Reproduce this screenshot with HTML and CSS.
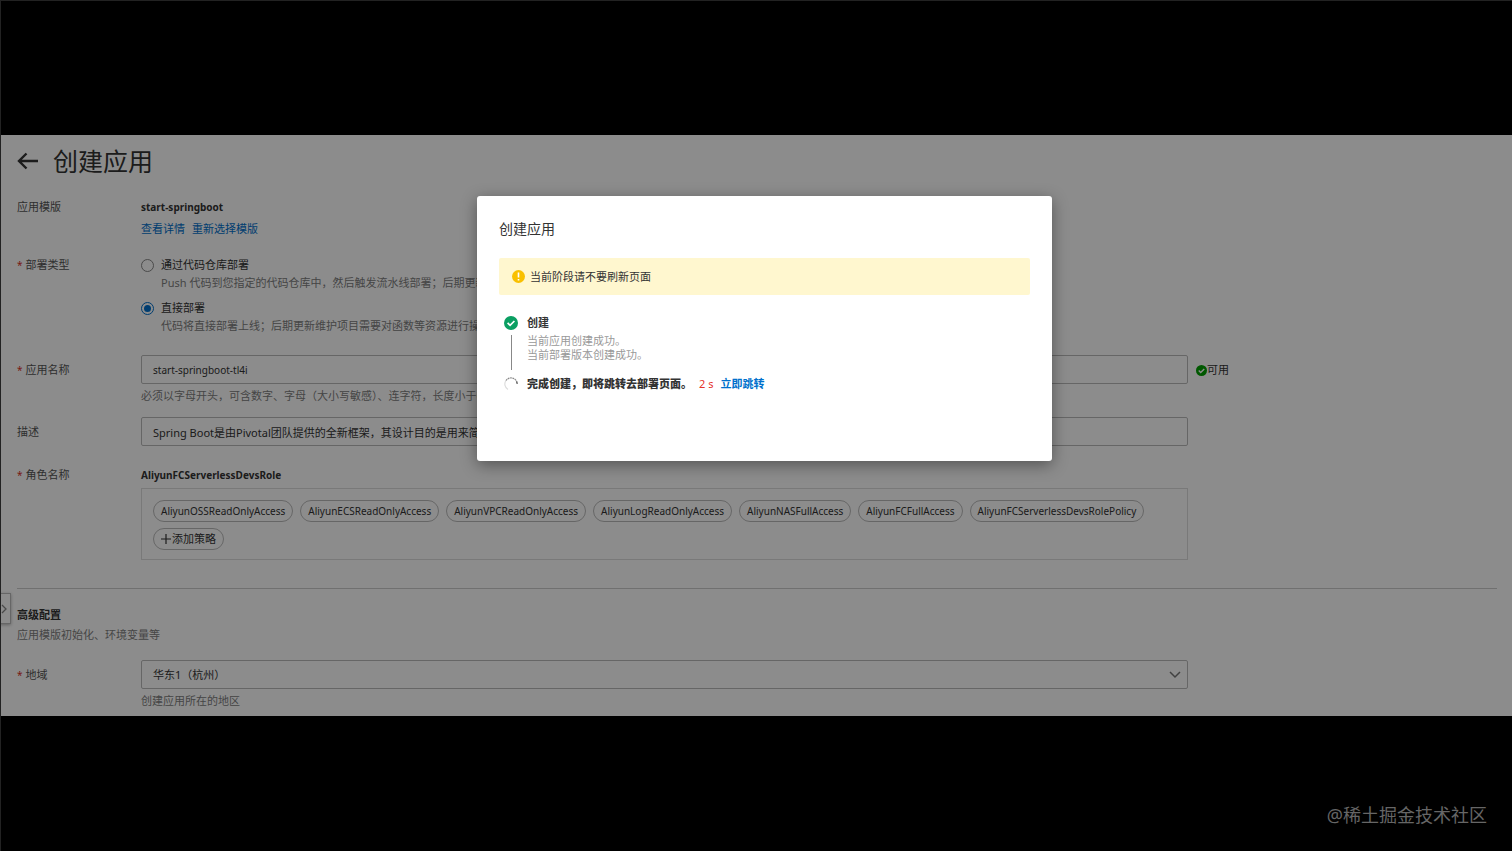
FILE: index.html
```html
<!DOCTYPE html>
<html lang="zh-CN">
<head>
<meta charset="UTF-8">
<meta name="viewport" content="width=device-width, initial-scale=1.0">
<title>创建应用</title>
<link rel="stylesheet" href="styles.css">
</head>
<body>
    <main class="stage">
        <header class="page-header">
            <a href="#" class="back" aria-label="返回">
                <svg width="22" height="18" viewBox="0 0 22 18" fill="none" stroke="currentColor" stroke-width="2.4"><path d="M21 9H2M9.500 1.500L2 9l7.500 7.500"/></svg>
            </a>
            <h1>创建应用</h1>
        </header>

        <form class="app-form">
            <div class="row row-template">
                <span class="label">应用模版</span>
                <div>
                    <strong class="latin">start-springboot</strong>
                    <div class="links"><a href="#">查看详情</a><a href="#">重新选择模版</a></div>
                </div>
            </div>

            <div class="row row-deploy">
                <span class="label required">部署类型</span>
                <div class="options">
                    <div class="option">
                        <input type="radio" id="repo" name="deploy">
                        <label for="repo">通过代码仓库部署</label>
                        <p class="help">Push 代码到您指定的代码仓库中，然后触发流水线部署；后期更新项目</p>
                    </div>
                    <div class="option">
                        <input type="radio" id="direct" name="deploy" checked>
                        <label for="direct">直接部署</label>
                        <p class="help">代码将直接部署上线；后期更新维护项目需要对函数等资源进行操作</p>
                    </div>
                </div>
            </div>

            <div class="row row-name">
                <label class="label required" for="name">应用名称</label>
                <div>
                    <input type="text" class="field latin" id="name" value="start-springboot-tl4i">
                    <p class="help">必须以字母开头，可含数字、字母（大小写敏感）、连字符，长度小于64</p>
                </div>
                <span class="available">
                    <svg width="11" height="11" viewBox="0 0 14 14"><circle cx="7" cy="7" r="7" fill="#00a000"/><path d="M3.500 7l2.500 2.500 4.500-4.500" fill="none" stroke="#fff" stroke-width="1.800"/></svg>可用
                </span>
            </div>

            <div class="row row-desc">
                <label class="label" for="desc">描述</label>
                <input type="text" class="field" id="desc" value="Spring Boot是由Pivotal团队提供的全新框架，其设计目的是用来简化新Spring应用">
            </div>

            <div class="row row-role">
                <span class="label required">角色名称</span>
                <div>
                    <strong class="latin">AliyunFCServerlessDevsRole</strong>
                    <div class="policies">
                        <span class="chip latin">AliyunOSSReadOnlyAccess</span>
                        <span class="chip latin">AliyunECSReadOnlyAccess</span>
                        <span class="chip latin">AliyunVPCReadOnlyAccess</span>
                        <span class="chip latin">AliyunLogReadOnlyAccess</span>
                        <span class="chip latin">AliyunNASFullAccess</span>
                        <span class="chip latin">AliyunFCFullAccess</span>
                        <span class="chip latin">AliyunFCServerlessDevsRolePolicy</span>
                        <button type="button" class="chip add">
                            <svg width="10" height="10" viewBox="0 0 10 10" stroke="currentColor" stroke-width="1.200"><path d="M5 0v10M0 5h10"/></svg>添加策略
                        </button>
                    </div>
                </div>
            </div>

            <section class="advanced">
                <h2>高级配置</h2>
                <p class="help">应用模版初始化、环境变量等</p>
            </section>

            <div class="row row-region">
                <label class="label required" for="region">地域</label>
                <div>
                    <div class="select">
                        <select class="field" id="region"><option>华东1（杭州）</option></select>
                        <svg width="12" height="8" viewBox="0 0 12 8" fill="none" stroke="#777" stroke-width="1.500"><path d="M1 1l5 5 5-5"/></svg>
                    </div>
                    <p class="help">创建应用所在的地区</p>
                </div>
            </div>
        </form>

        <button type="button" class="drawer" aria-label="展开">
            <svg width="6" height="10" viewBox="0 0 6 10" fill="none" stroke="currentColor" stroke-width="1.300"><path d="M1 1l4 4-4 4"/></svg>
        </button>

        <div class="overlay">
            <div class="dialog" role="dialog" aria-labelledby="dialog-title">
                <h2 id="dialog-title">创建应用</h2>
                <div class="alert">
                    <svg width="13" height="13" viewBox="0 0 13 13"><circle cx="6.500" cy="6.500" r="6.500" fill="#f9c000"/><path d="M6.500 2.500v5M6.500 9v1.600" stroke="#fff" stroke-width="1.600"/></svg>
                    当前阶段请不要刷新页面
                </div>
                <ol class="steps">
                    <li>
                        <div class="marker">
                            <svg width="14" height="14" viewBox="0 0 14 14"><circle cx="7" cy="7" r="7" fill="#0a9f62"/><path d="M3.600 6.800l2.500 2.500 4.300-4.300" fill="none" stroke="#fff" stroke-width="1.700"/></svg>
                            <span class="line"></span>
                        </div>
                        <div>
                            <strong>创建</strong>
                            <p>当前应用创建成功。</p>
                            <p>当前部署版本创建成功。</p>
                        </div>
                    </li>
                    <li>
                        <div class="marker">
                            <svg width="14" height="14" viewBox="0 0 14 14" fill="none" stroke-width="1.200"><path d="M4 12.500A6.200 6.200 0 0 1 2 3.500" stroke="#ddd"/><path d="M2 3.500A6.200 6.200 0 0 1 13 5.500" stroke="#888" stroke-dasharray="1.800 .6"/><path d="M12.800 4.800L13.200 7" stroke="#555"/></svg>
                        </div>
                        <div class="finish">
                            <strong>完成创建，即将跳转去部署页面。</strong>
                            <span class="count">2 s</span>
                            <a href="#">立即跳转</a>
                        </div>
                    </li>
                </ol>
            </div>
        </div>
    </main>
    <footer class="watermark">@稀土掘金技术社区</footer>
</body>
</html>
```

FILE: styles.css
```css
* {
    box-sizing: border-box;
}

body {
    margin: 0;
    min-height: 100vh;
    padding-top: 134px;
    background-color: #000;
    border-top: 1px solid #222;
    border-left: 1px solid #222;
    font-family: "Noto Sans", "Noto Sans CJK SC", sans-serif;
    font-size: 11px;
    line-height: 18px;
    color: #333;
}

h1, h2, p, ol {
    margin: 0;
    padding: 0;
    font-weight: normal;
}

a {
    color: #0070cc;
    text-decoration: none;
}

button, input, select {
    font: inherit;
    color: inherit;
}

.stage {
    position: relative;
    margin-left: -1px;
    background-color: #fff;
    padding: 9px 15px 6px 17px;
}

.page-header {
    display: flex;
    align-items: center;
    gap: 14px;
    height: 34px;
}

.page-header h1 {
    font-size: 25px;
    line-height: 34px;
}

.back {
    display: flex;
    color: #333;
}

/* form rows: label, control, status */
.row {
    display: grid;
    grid-template-columns: 124px 1fr 301px;
    align-items: start;
}

.label {
    color: #555;
}

.required::before {
    content: "*";
    color: #d93026;
    font-size: 10px;
    margin-right: 3px;
}

.help {
    color: #808080;
    white-space: nowrap;
}

.latin {
    font-size: 10px;
}

.field {
    display: block;
    width: calc(100% - 8px);
    height: 29px;
    padding: 0 11px;
    border: 1px solid #bbb;
    border-radius: 2px;
    background-color: #fff;
    appearance: none;
}

.field + .help,
.select + .help {
    margin-top: 3px;
}

.row-template {
    margin-top: 20px;
}

.links {
    display: flex;
    gap: 7px;
    margin-top: 4px;
}

.row-deploy {
    margin-top: 18px;
}

.options {
    display: grid;
    gap: 7px;
}

.option {
    display: grid;
    grid-template-columns: 20px 1fr;
    align-items: center;
}

.option input {
    appearance: none;
    width: 13px;
    height: 13px;
    margin: 0;
    border: 1px solid #888;
    border-radius: 50%;
}

.option input:checked {
    border: 1px solid #0070cc;
    background-color: #0070cc;
    background-clip: content-box;
    padding: 2px;
}

.option .help {
    grid-column: 2;
}

.row-name {
    margin-top: 20px;
}

.row-name .label,
.row-desc .label,
.row-region .label {
    padding-top: 6px;
}

.available {
    display: flex;
    align-items: center;
    padding-top: 6px;
}

.row-desc {
    margin-top: 12px;
}

.row-role {
    margin-top: 20px;
}

.policies {
    display: flex;
    flex-wrap: wrap;
    gap: 6px 7px;
    width: calc(100% - 8px);
    margin-top: 4px;
    padding: 11px 11px 9px;
    border: 1px solid #ddd;
}

.chip {
    height: 22px;
    padding: 0 7px;
    border: 1px solid #bbb;
    border-radius: 11px;
    background-color: #fff;
    line-height: 20px;
}

.add {
    display: flex;
    align-items: center;
    gap: 1px;
}

.advanced {
    margin-top: 28px;
    padding-top: 17px;
    border-top: 1px solid #ccc;
}

.advanced h2 {
    font-size: 11px;
    font-weight: bold;
    line-height: 18px;
}

.advanced .help {
    margin-top: 2px;
}

.row-region {
    margin-top: 16px;
}

.select {
    position: relative;
}

.select svg {
    position: absolute;
    top: 11px;
    right: 15px;
}

.drawer {
    position: absolute;
    left: -1px;
    bottom: 92px;
    display: flex;
    align-items: center;
    width: 12px;
    height: 31px;
    padding: 0 1px;
    border: 1px solid #bbb;
    background-color: #fff;
    box-shadow: 0 1px 3px rgba(0, 0, 0, 0.3);
    color: #888;
}

/* dialog over the dimmed form */
.overlay {
    position: absolute;
    inset: 0;
    display: flex;
    justify-content: center;
    align-items: flex-start;
    padding: 61px 0 0 17px;
    background-color: rgba(0, 0, 0, 0.45);
}

.dialog {
    width: 575px;
    max-width: 90%;
    min-height: 265px;
    padding: 22px;
    border-radius: 3px;
    background-color: #fff;
    box-shadow: 0 4px 16px rgba(0, 0, 0, 0.4);
}

.dialog h2 {
    font-size: 14px;
    line-height: 22px;
}

.alert {
    display: flex;
    align-items: center;
    gap: 5px;
    height: 37px;
    margin-top: 18px;
    padding: 0 13px;
    border-radius: 2px;
    background-color: #fff7cf;
}

.steps {
    margin-top: 19px;
    padding-left: 5px;
    list-style: none;
}

.steps li {
    display: flex;
    gap: 9px;
}

.steps li + li {
    margin-top: 5px;
}

.steps p {
    color: #999;
    line-height: 14px;
}

.steps strong {
    display: block;
}

.steps strong + p {
    margin-top: 2px;
}

.marker {
    display: flex;
    flex-direction: column;
    align-items: center;
    gap: 5px;
    padding-top: 2px;
}

.line {
    width: 1px;
    height: 35px;
    background-color: #888;
}

.finish {
    display: flex;
    gap: 7px;
    font-weight: bold;
}

.count {
    color: #e5332a;
    font-weight: normal;
}

.watermark {
    padding: 85px 25px 20px;
    color: #666;
    font-size: 18px;
    line-height: 28px;
    text-align: right;
}
```
